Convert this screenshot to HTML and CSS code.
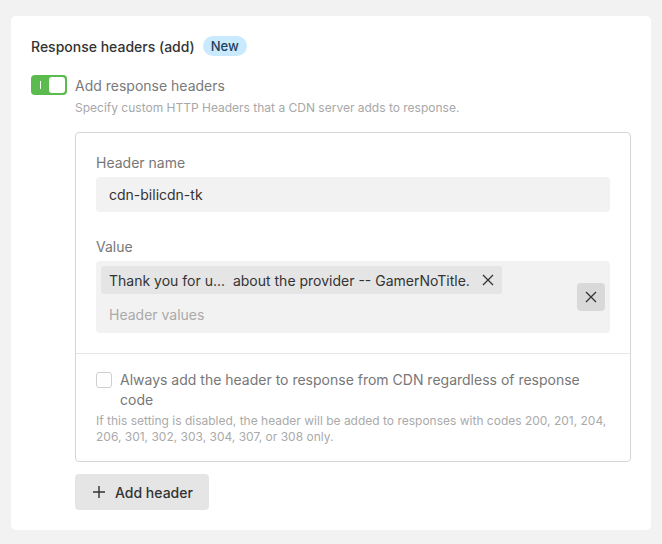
FILE: index.html
```html
<!DOCTYPE html>
<html>
<head>
<meta charset="utf-8">
<link rel="stylesheet" href="styles.css">
</head>
<body>
<div class="card">
  <div class="title-row">
    <span class="title">Response headers (add)</span>
    <span class="badge">New</span>
  </div>
  <div class="toggle-row">
    <span class="toggle"><span class="toggle-mark"></span><span class="knob"></span></span>
    <span class="toggle-label">Add response headers</span>
  </div>
  <div class="section">
    <div class="hint">Specify custom HTTP Headers that a CDN server adds to response.</div>
    <div class="box">
      <div class="box-top">
        <div class="label">Header name</div>
        <div class="input">cdn-bilicdn-tk</div>
        <div class="label value-label">Value</div>
        <div class="multi">
          <div class="multi-main">
            <div class="chip">
              <span class="chip-text">Thank you for u...&nbsp; about the provider -- GamerNoTitle.</span>
              <svg class="chip-x" width="12" height="12" viewBox="0 0 12 12"><path d="M1 1L11 11M11 1L1 11" stroke="#333" stroke-width="1.3" fill="none"/></svg>
            </div>
            <div class="placeholder">Header values</div>
          </div>
          <span class="clear"><svg width="12" height="12" viewBox="0 0 12 12"><path d="M1 1L11 11M11 1L1 11" stroke="#333" stroke-width="1.3" fill="none"/></svg></span>
        </div>
      </div>
      <div class="box-bottom">
        <div class="check-row">
          <span class="checkbox"></span>
          <span class="check-label">Always add the header to response from CDN regardless of response code</span>
        </div>
        <div class="small">If this setting is disabled, the header will be added to responses with codes 200, 201, 204, 206, 301, 302, 303, 304, 307, or 308 only.</div>
      </div>
    </div>
    <button class="add-btn"><svg width="12" height="12" viewBox="0 0 12 12"><path d="M6 0V12M0 6H12" stroke="#333" stroke-width="1.4" fill="none"/></svg><span>Add header</span></button>
  </div>
</div>
</body>
</html>
```
FILE: styles.css
```css
html, body {
  margin: 0;
  padding: 0;
  background: #f2f2f2;
  font-family: Inter, "Liberation Sans", sans-serif;
}
body {
  padding: 16px 11px 14px 11px;
}
.card {
  background: #fff;
  border-radius: 5px;
  width: 640px;
  height: 514px;
  box-sizing: border-box;
  padding: 20px 20px 0 20px;
}
.title-row {
  display: flex;
  align-items: center;
  height: 20px;
}
.title {
  font-size: 14px;
  font-weight: 500;
  color: #333;
}
.badge {
  margin-left: 8px;
  background: #c9e9fc;
  color: #1f3e5a;
  font-size: 13px;
  font-weight: 500;
  height: 20px;
  line-height: 20px;
  padding: 0 8px;
  border-radius: 10px;
}
.toggle-row {
  display: flex;
  align-items: center;
  margin-top: 19px;
  height: 20px;
}
.toggle {
  position: relative;
  width: 36px;
  height: 20px;
  background: #5bbb4e;
  border-radius: 4px;
  box-sizing: border-box;
}
.toggle-mark {
  position: absolute;
  left: 9px;
  top: 6px;
  width: 1px;
  height: 8px;
  background: #fff;
}
.knob {
  position: absolute;
  right: 2px;
  top: 2px;
  width: 16px;
  height: 16px;
  background: #fff;
  border-radius: 3px;
}
.toggle-label {
  margin-left: 8px;
  font-size: 14px;
  color: #7a7a7a;
}
.section {
  padding-left: 44px;
}
.hint {
  font-size: 12px;
  color: #a8a8a8;
  margin-top: 5px;
  line-height: 16px;
}
.box {
  margin-top: 16px;
  border: 1px solid #d6d6d6;
  border-radius: 4px;
  width: 556px;
  box-sizing: border-box;
}
.box-top {
  padding: 20px 20px 20px 20px;
  border-bottom: 1px solid #e6e6e6;
}
.label {
  font-size: 14px;
  color: #777;
  line-height: 20px;
}
.input {
  margin-top: 4px;
  height: 35px;
  background: #f2f2f2;
  border-radius: 4px;
  display: flex;
  align-items: center;
  padding-left: 13px;
  font-size: 14px;
  color: #333;
}
.value-label {
  margin-top: 25px;
}
.multi {
  margin-top: 4px;
  background: #f2f2f2;
  border-radius: 4px;
  display: flex;
  align-items: center;
  padding: 5px 5px 5px 5px;
  height: 72px;
  box-sizing: border-box;
}
.multi-main {
  flex: 1;
  display: flex;
  flex-direction: column;
  align-items: flex-start;
  align-self: flex-start;
}
.chip {
  display: flex;
  align-items: center;
  background: #e5e5e5;
  border-radius: 3px;
  height: 28px;
  padding: 0 8px 0 8px;
  font-size: 14px;
  color: #333;
}
.chip-x {
  margin-left: 12px;
}
.placeholder {
  margin-top: 11px;
  margin-left: 8px;
  font-size: 14px;
  color: #aaa;
  line-height: 20px;
}
.clear {
  width: 28px;
  height: 28px;
  background: #d9d9d9;
  border-radius: 4px;
  display: flex;
  align-items: center;
  justify-content: center;
}
.box-bottom {
  padding: 16px 20px 16px 20px;
}
.check-row {
  display: flex;
  align-items: flex-start;
}
.checkbox {
  flex: none;
  width: 16px;
  height: 16px;
  box-sizing: border-box;
  border: 1px solid #cfcfcf;
  border-radius: 3px;
  margin-top: 2px;
  margin-right: 8px;
}
.check-label {
  font-size: 14px;
  line-height: 20px;
  color: #777;
  width: 490px;
}
.small {
  margin-top: 3px;
  font-size: 12px;
  line-height: 16px;
  color: #aaa;
}
.add-btn {
  margin-top: 12px;
  height: 36px;
  width: 134px;
  border: none;
  background: #e5e5e5;
  border-radius: 4px;
  display: flex;
  align-items: center;
  padding: 0 0 0 18px;
  font-family: Inter, "Liberation Sans", sans-serif;
  font-size: 14px;
  font-weight: 500;
  color: #333;
}
.add-btn span {
  margin-left: 10px;
}
```
